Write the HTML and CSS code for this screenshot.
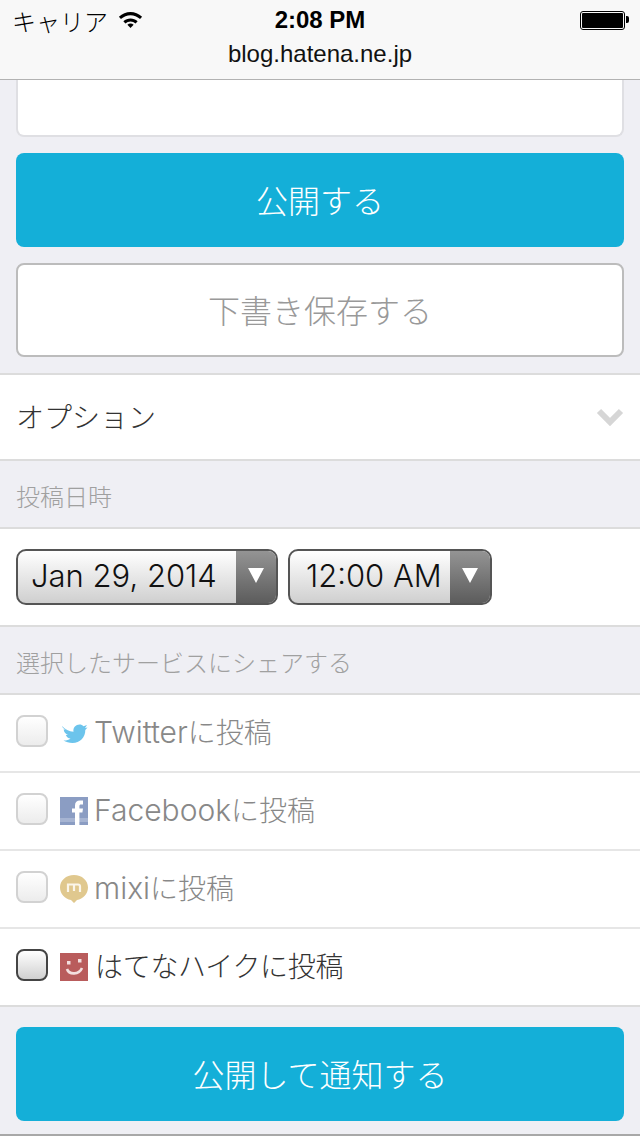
FILE: index.html
```html
<!DOCTYPE html>
<html lang="ja">
<head>
    <meta charset="UTF-8">
    <meta name="viewport" content="width=device-width, initial-scale=1.0">
    <title>blog.hatena.ne.jp</title>
    <link rel="stylesheet" href="styles.css">
</head>
<body>
    <!-- Browser chrome -->
    <header class="top-bar">
        <div class="status-row">
            <div class="status-left">
                <span class="carrier">キャリア</span>
                <svg class="wifi" width="25" height="18" viewBox="0 0 28 20">
                    <path d="M1 7.5C8.500 .5 19.500 .5 27 7.500L24.700 10C18.500 4.300 9.500 4.300 3.300 10Z" fill="#000"/>
                    <path d="M6 12.500C10.600 8.400 17.400 8.400 22 12.500L19.700 15C16.400 12 11.600 12 8.300 15Z" fill="#000"/>
                    <path d="M10.500 16.300C12.500 14.700 15.500 14.700 17.500 16.300L14 20Z" fill="#000"/>
                </svg>
            </div>
            <span class="clock">2:08 PM</span>
            <div class="battery"><div class="battery-fill"></div></div>
        </div>
        <div class="url">blog.hatena.ne.jp</div>
    </header>

    <div class="top-actions">
        <div class="text-box"></div>
        <button class="btn btn-primary">公開する</button>
        <button class="btn btn-draft">下書き保存する</button>
    </div>

    <div class="option-row">
        <span>オプション</span>
        <svg class="chevron" width="28" height="18" viewBox="0 0 28 18">
            <path d="M3 3L14 14L25 3" fill="none" stroke="#d6d6d6" stroke-width="6"/>
        </svg>
    </div>

    <div class="section-label">投稿日時</div>
    <div class="date-row">
        <div class="select select-date">
            <span class="select-value">Jan 29, 2014</span>
            <span class="select-arrow"></span>
        </div>
        <div class="select select-time">
            <span class="select-value">12:00 AM</span>
            <span class="select-arrow"></span>
        </div>
    </div>

    <div class="section-label">選択したサービスにシェアする</div>
    <ul class="share-list">
        <li class="share-item">
            <span class="check"></span>
            <svg class="service-icon" width="28" height="28" viewBox="0 0 28 28">
                <path d="M2 7C5 10 9 12.500 13.500 12.800C12.800 8.500 16 5.500 19.500 5.500C21.200 5.500 22.500 6.200 23.500 7.200L27 6L25 9L27.500 8.500L25.300 11C25.500 18 20 24 12.500 24C9 24 6 23 3.500 21.500C6 21.700 8.500 21 10.500 19.500C8.300 19.300 6.500 18 5.800 16L8 15.800C5.500 15 3.800 13 3.700 10.300L6 11C3.500 9.500 2.300 8.500 2 7Z" fill="#6cc4ec"/>
            </svg>
            <span class="service-name"><span class="latin">Twitter</span>に投稿</span>
        </li>
        <li class="share-item">
            <span class="check"></span>
            <svg class="service-icon" width="28" height="28" viewBox="0 0 28 28">
                <rect width="28" height="28" fill="#8b9dc3"/>
                <rect y="21" width="28" height="4" fill="#a6b4d2"/>
                <path d="M15 28V15.500H12V11.500H15V8.500C15 5.200 17 3.500 19.800 3.500H23V7.500H21C19.800 7.500 19.400 8 19.400 9.200V11.500H23L22.400 15.500H19.400V28Z" fill="#fff"/>
            </svg>
            <span class="service-name"><span class="latin">Facebook</span>に投稿</span>
        </li>
        <li class="share-item">
            <span class="check"></span>
            <svg class="service-icon" width="28" height="28" viewBox="0 0 28 28">
                <path d="M14 0C22 0 28 5.500 28 12.500C28 19 23 24 17 25L14 28L11 25C5 24 0 19 0 12.500C0 5.500 6 0 14 0Z" fill="#e0c88e"/>
                <path d="M8 17V9.500H18C19.500 9.500 20 10.300 20 11.500V17M14 9.500V16" fill="none" stroke="#fbf6ea" stroke-width="2.200"/>
            </svg>
            <span class="service-name"><span class="latin">mixi</span>に投稿</span>
        </li>
        <li class="share-item share-item-on">
            <span class="check"></span>
            <svg class="service-icon" width="28" height="28" viewBox="0 0 28 28">
                <rect width="28" height="28" fill="#b95c5c"/>
                <rect x="7" y="8" width="3.500" height="3.500" fill="#f3dede"/>
                <rect x="18" y="6" width="3.500" height="3.500" fill="#f3dede"/>
                <path d="M7 16C9 22 19 22 22 15" fill="none" stroke="#f3dede" stroke-width="2.600"/>
            </svg>
            <span class="service-name">はてなハイクに投稿</span>
        </li>
    </ul>

    <div class="bottom-actions">
        <button class="btn btn-primary">公開して通知する</button>
    </div>
</body>
</html>
```
FILE: styles.css
```css
body {
    margin: 0;
    padding: 0;
    height: 1136px;
    overflow: hidden;
    background-color: #efeff4;
    font-family: Inter, "Noto Sans CJK JP", sans-serif;
    font-weight: 300;
    color: #333;
}

.top-bar {
    height: 79px;
    background-color: #f8f8f8;
    border-bottom: 1px solid #b2b2b2;
    font-family: "Liberation Sans", "Noto Sans CJK JP", sans-serif;
}

.status-row {
    display: flex;
    align-items: center;
    justify-content: space-between;
    height: 40px;
    padding: 0 15px 0 12px;
    position: relative;
}

.status-left {
    display: flex;
    align-items: center;
    gap: 10px;
}

.carrier {
    font-size: 24px;
    color: #000;
}

.wifi {
    margin-top: -2px;
}

.clock {
    position: absolute;
    left: 0;
    right: 0;
    text-align: center;
    font-size: 24px;
    font-weight: bold;
    color: #000;
}

.battery {
    width: 41px;
    height: 15px;
    padding: 1px;
    border: 1px solid #000;
    border-radius: 3px;
    position: relative;
}

.battery::after {
    content: "";
    position: absolute;
    right: -5px;
    top: 4px;
    width: 3px;
    height: 7px;
    background-color: #000;
    border-radius: 0 2px 2px 0;
}

.battery-fill {
    height: 100%;
    background-color: #000;
    border-radius: 1px;
}

.url {
    text-align: center;
    font-size: 24px;
    line-height: 28px;
    color: #111;
}

.top-actions {
    padding: 0 16px 16px;
    border-bottom: 2px solid #dcdcdc;
}

.text-box {
    height: 55px;
    background-color: #fff;
    border: 2px solid #dfdfe3;
    border-top: none;
    border-radius: 0 0 8px 8px;
    margin-bottom: 16px;
}

.btn {
    display: block;
    width: 100%;
    height: 94px;
    padding: 0 0 3px;
    font-family: inherit;
    font-weight: 300;
    font-size: 32px;
    border-radius: 8px;
}

.btn-primary {
    background-color: #14afd8;
    border: none;
    color: #fff;
}

.btn-draft {
    margin-top: 16px;
    background-color: #fff;
    border: 2px solid #bcbcbc;
    color: #999;
}

.option-row {
    display: flex;
    align-items: center;
    justify-content: space-between;
    height: 84px;
    padding: 0 16px;
    background-color: #fff;
    border-bottom: 2px solid #dcdcdc;
    font-size: 28px;
}

.option-row span {
    margin-top: -3px;
}

.section-label {
    height: 68px;
    line-height: 74px;
    padding: 0 16px;
    box-sizing: border-box;
    font-size: 24px;
    color: #a0a0a0;
    border-bottom: 2px solid #dcdcdc;
}

.date-row {
    display: flex;
    gap: 10px;
    align-items: center;
    height: 96px;
    padding: 0 16px;
    background-color: #fff;
    border-bottom: 2px solid #dcdcdc;
}

.select {
    display: flex;
    height: 56px;
    box-sizing: border-box;
    border: 2px solid #555;
    border-radius: 10px;
    overflow: hidden;
    background: linear-gradient(#fff, #cfcfcf);
    color: #111;
    font-size: 31px;
}

.select-date {
    width: 262px;
}

.select-time {
    width: 204px;
}

.select-value {
    flex: 1;
    line-height: 50px;
    padding-left: 13px;
    white-space: nowrap;
}

.select-time .select-value {
    padding-left: 16px;
}

.select-arrow {
    width: 40px;
    display: flex;
    align-items: center;
    justify-content: center;
    background: linear-gradient(#949494, #5c5c5c);
}

.select-arrow::before {
    content: "";
    margin-top: -3px;
    border-left: 8px solid transparent;
    border-right: 8px solid transparent;
    border-top: 15px solid #fff;
}

.share-list {
    margin: 0;
    padding: 0;
    list-style: none;
    background-color: #fff;
}

.share-item {
    display: flex;
    align-items: center;
    height: 76px;
    padding: 0 16px;
    border-bottom: 2px solid #e6e6e6;
    font-size: 28px;
    color: #888;
}

.share-item:last-child {
    border-bottom-color: #dcdcdc;
}

.check {
    width: 32px;
    height: 32px;
    box-sizing: border-box;
    border: 2px solid #d2d2d2;
    border-radius: 8px;
    background: linear-gradient(#fff, #ececec);
    margin-right: 12px;
    margin-top: -4px;
}

.service-icon {
    margin-right: 7px;
}

.service-name {
    margin-top: -4px;
}

.latin {
    font-size: 30px;
    margin-left: -1px;
}

.share-item-on {
    color: #333;
    letter-spacing: -0.3px;
}

.share-item-on .check {
    border-color: #444;
    background: linear-gradient(#fff, #d0d0d0);
}

.bottom-actions {
    padding: 20px 16px 0;
    height: 107px;
    border-bottom: 2px solid #a8a8a8;
}
```
